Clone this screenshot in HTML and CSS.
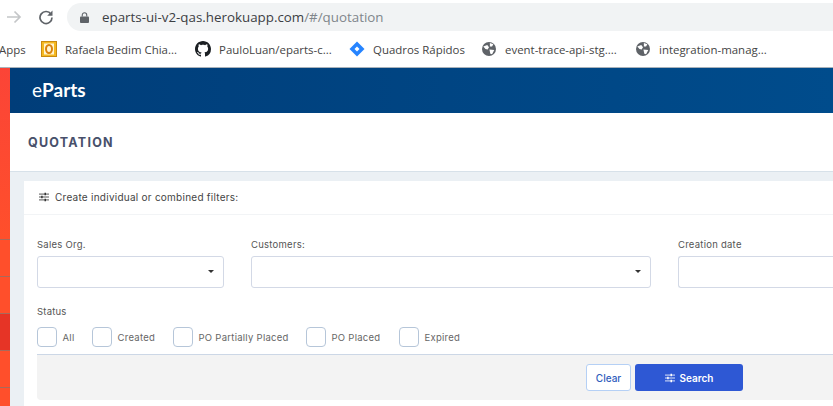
FILE: index.html
```html
<!DOCTYPE html>
<html lang="en">
<head>
    <meta charset="UTF-8">
    <title>eParts - Quotation</title>
    <link rel="stylesheet" href="styles.css">
</head>
<body>
    <div class="chrome">
        <div class="toolbar">
            <svg class="nav-icon" viewBox="0 0 16 16" width="16" height="16"><path d="M1 8h13M8.500 2.500 14 8l-5.500 5.500" fill="none" stroke="#c4c6c8" stroke-width="1.700"/></svg>
            <svg class="nav-icon reload" viewBox="0 0 16 16" width="16" height="16"><path d="M13 5.200A6 6 0 1 0 14 8.500" fill="none" stroke="#5f6368" stroke-width="1.700"/><path d="M14.500 1.500v5.300H9.200z" fill="#5f6368"/></svg>
            <div class="address">
                <svg class="lock" viewBox="0 0 10 12" width="9" height="11"><path d="M1 5h8a1 1 0 0 1 1 1v5a1 1 0 0 1-1 1H1a1 1 0 0 1-1-1V6a1 1 0 0 1 1-1z" fill="#5f6368"/><path d="M2.500 5V3.300a2.500 2.500 0 0 1 5 0V5" fill="none" stroke="#5f6368" stroke-width="1.200"/></svg>
                <span class="host">eparts-ui-v2-qas.herokuapp.com</span><span class="path">/#/quotation</span>
            </div>
        </div>
        <div class="bookmarks">
            <span class="bm bm-apps">Apps</span>
            <span class="bm bm-rafaela">
                <svg viewBox="0 0 16 16" width="16" height="16"><rect x="0.500" y="0.500" width="15" height="15" fill="#f5b921" stroke="#c98a10"/><rect x="3" y="2.500" width="10" height="11" fill="#fff4d0"/><ellipse cx="8" cy="8" rx="3" ry="4" fill="none" stroke="#d9820f" stroke-width="2"/></svg>
                Rafaela Bedim Chia...
            </span>
            <span class="bm bm-github">
                <svg viewBox="0 0 16 16" width="16" height="16"><path fill="#1b1f23" d="M8 0C3.580 0 0 3.580 0 8c0 3.540 2.290 6.530 5.470 7.590.4.070.55-.17.55-.38 0-.19-.01-.82-.01-1.490-2.010.37-2.530-.49-2.690-.94-.09-.23-.48-.94-.82-1.130-.28-.15-.68-.52-.01-.53.63-.01 1.080.58 1.230.82.720 1.210 1.870.87 2.330.66.070-.52.280-.87.510-1.070-1.780-.2-3.640-.89-3.640-3.950 0-.87.310-1.590.820-2.150-.08-.2-.36-1.020.08-2.120 0 0 .67-.21 2.200.82.640-.18 1.320-.27 2-.27s1.360.09 2 .27c1.530-1.040 2.200-.82 2.200-.82.440 1.100.160 1.920.080 2.120.510.560.820 1.270.820 2.150 0 3.070-1.870 3.750-3.650 3.950.290.250.540.730.540 1.480 0 1.070-.01 1.930-.01 2.200 0 .210.150.460.550.380A8.010 8.010 0 0 0 16 8c0-4.420-3.580-8-8-8z"/></svg>
                PauloLuan/eparts-c...
            </span>
            <span class="bm bm-jira">
                <svg viewBox="0 0 16 16" width="16" height="16"><path d="M8 0.500 15.500 8 8 15.500 0.500 8z" fill="#2684ff"/><path d="M8 5.500 10.500 8 8 10.500 5.500 8z" fill="#fff"/></svg>
                Quadros Rápidos
            </span>
            <span class="bm bm-trace">
                <svg class="globe" viewBox="0 0 16 16" width="14" height="14"><circle cx="8" cy="8" r="8" fill="#5f6368"/><path d="M1.500 5 6 3.500l2 2.500-1.500 2.500-2.500-.5zM9 1l4 1.500-1.500 2.500H9zM8.500 8.500l5.500.5-2.500 5-2-.5z" fill="#fff"/></svg>
                event-trace-api-stg....
            </span>
            <span class="bm">
                <svg class="globe" viewBox="0 0 16 16" width="14" height="14"><circle cx="8" cy="8" r="8" fill="#5f6368"/><path d="M1.500 5 6 3.500l2 2.500-1.500 2.500-2.500-.5zM9 1l4 1.500-1.500 2.500H9zM8.500 8.500l5.500.5-2.500 5-2-.5z" fill="#fff"/></svg>
                integration-manag...
            </span>
        </div>
    </div>

    <div class="app">
        <div class="sidebar">
            <div class="side-item side-top"></div>
            <div class="side-item"></div>
            <div class="side-item"></div>
            <div class="side-item side-active"></div>
            <div class="side-item"></div>
        </div>
        <div class="main">
            <div class="brand-bar"><span class="brand"><span class="brand-e">e</span>Parts</span></div>
            <div class="title-bar"><h1>QUOTATION</h1></div>
            <div class="content">
                <div class="card">
                    <div class="card-head">
                        <svg class="filter-icon" viewBox="0 0 12 12" width="10" height="10"><path d="M0 2.500h12M0 6h12M0 9.500h12" stroke="#333" stroke-width="1"/><path d="M7.500 1v3M3.500 4.500v3M7.500 8v3" stroke="#333" stroke-width="1.800"/></svg>
                        Create individual or combined filters:
                    </div>
                    <div class="card-body">
                        <div class="fields">
                            <div class="field field-org">
                                <label>Sales Org.</label>
                                <div class="select"><span class="caret"></span></div>
                            </div>
                            <div class="field field-customers">
                                <label>Customers:</label>
                                <div class="select"><span class="caret"></span></div>
                            </div>
                            <div class="field field-date">
                                <label>Creation date</label>
                                <div class="select"></div>
                            </div>
                        </div>
                        <div class="status-label">Status</div>
                        <div class="status-row">
                            <span class="check check-all"><i></i>All</span>
                            <span class="check check-created"><i></i>Created</span>
                            <span class="check check-partial"><i></i>PO Partially Placed</span>
                            <span class="check check-placed"><i></i>PO Placed</span>
                            <span class="check"><i></i>Expired</span>
                        </div>
                    </div>
                    <div class="actions">
                        <button class="btn-clear">Clear</button>
                        <button class="btn-search">
                            <svg viewBox="0 0 12 12" width="10" height="10"><path d="M0 2.500h12M0 6h12M0 9.500h12" stroke="#fff" stroke-width="1"/><path d="M7.500 1v3M3.500 4.500v3M7.500 8v3" stroke="#fff" stroke-width="1.800"/></svg>
                            Search
                        </button>
                    </div>
                </div>
            </div>
        </div>
    </div>
</body>
</html>
```

FILE: styles.css
```css
html, body {
    margin: 0;
    padding: 0;
    height: 406px;
    overflow: hidden;
}
body {
    width: 833px;
    background-color: #fff;
    font-family: 'Inter', 'Liberation Sans', sans-serif;
    color: #444;
}

/* browser chrome */
.chrome {
    height: 67px;
    background-color: #fff;
    border-bottom: 1px solid #a9b2ba;
    font-family: 'Open Sans', 'Liberation Sans', sans-serif;
}
.toolbar {
    display: flex;
    align-items: center;
    height: 34px;
}
.nav-icon {
    margin-left: 6px;
    flex: none;
}
.reload {
    margin-left: 16px;
}
.address {
    display: flex;
    align-items: center;
    flex: 1;
    height: 28px;
    margin-left: 13px;
    padding-left: 13px;
    background-color: #f1f3f4;
    border-radius: 14px 0 0 14px;
    font-size: 13.350px;
}
.lock {
    margin-right: 13px;
}
.host {
    color: #3c4043;
}
.path {
    color: #80868b;
}
.bookmarks {
    display: flex;
    align-items: center;
    height: 30px;
    margin-left: -1px;
    font-size: 11.450px;
    color: #444;
    white-space: nowrap;
}
.bm {
    display: flex;
    align-items: center;
    gap: 8px;
}
.bm-apps {
    width: 42px;
}
.bm-rafaela {
    width: 154px;
}
.bm-github {
    width: 154px;
}
.bm-jira {
    width: 133px;
}
.bm-trace {
    width: 154px;
}
.globe {
    margin-right: 1px;
}

/* app */
.app {
    display: flex;
    height: 338px;
}
.sidebar {
    display: flex;
    flex-direction: column;
    width: 10px;
    flex: none;
    background-color: #ff4f2b;
}
.side-item {
    height: 36px;
    border-bottom: 1px solid #a86a5c;
}
.side-top {
    height: 171px;
    background: linear-gradient(#fb4437, #ff4f2b);
}
.side-active {
    background-color: #e63426;
}
.main {
    flex: 1;
    min-width: 0;
}
.brand-bar {
    display: flex;
    align-items: center;
    height: 45px;
    padding-left: 22px;
    background: linear-gradient(to right, #003d79, #004c8c);
}
.brand {
    color: #fff;
    font-family: 'Lato', 'Liberation Sans', sans-serif;
    font-size: 19px;
    font-weight: 700;
    line-height: 43px;
    height: 45px;
}
.brand-e {
    font-weight: 400;
}
.title-bar {
    display: flex;
    align-items: center;
    height: 59px;
    padding-left: 18px;
    background-color: #fff;
    border-bottom: 1px solid #d7e1e9;
    box-sizing: border-box;
}
h1 {
    margin: 0;
    font-size: 12.500px;
    font-weight: 700;
    letter-spacing: 1.250px;
    color: #48506b;
}
.content {
    height: 225px;
    padding: 9px 0 0 14px;
    background-color: #ebf0f4;
}
.card {
    background-color: #fff;
    height: 225px;
    font-size: 9.500px;
}
.card-head {
    display: flex;
    align-items: center;
    gap: 6px;
    height: 32px;
    padding: 0 0 1px 15px;
    border-bottom: 1px solid #f2f4f6;
    font-size: 10px;
    letter-spacing: 0.250px;
    color: #444;
}
.card-body {
    padding: 24px 0 0 13px;
}
.fields {
    display: flex;
    gap: 27px;
}
.field {
    flex: none;
}
.field label {
    display: block;
    height: 17px;
    letter-spacing: 0.250px;
    color: #555;
}
.field-org {
    width: 187px;
}
.field-customers {
    width: 400px;
}
.field .select {
    position: relative;
    height: 30px;
    background-color: #fff;
    border: 1px solid #d3d9e6;
    border-radius: 3px;
}
/* this field runs on past the right edge of the window */
.field-date {
    flex: 1;
    min-width: 0;
}
.field-date .select {
    border-right: none;
    border-radius: 3px 0 0 3px;
}
.caret {
    position: absolute;
    right: 9px;
    top: 13px;
    border-left: 3px solid transparent;
    border-right: 3px solid transparent;
    border-top: 3.500px solid #333;
}
.status-label {
    margin-top: 18px;
    height: 21px;
    letter-spacing: 0.200px;
    color: #555;
}
.status-row {
    display: flex;
    align-items: center;
    letter-spacing: 0.270px;
    color: #666;
}
.check {
    display: flex;
    align-items: center;
    gap: 5.500px;
}
.check i {
    display: block;
    width: 18px;
    height: 18px;
    border: 1px solid #b6c6d9;
    border-radius: 4px;
}
.check-all {
    width: 55px;
}
.check-created {
    width: 81px;
}
.check-partial {
    width: 133px;
}
.check-placed {
    width: 93px;
}
.actions {
    display: flex;
    align-items: center;
    justify-content: flex-end;
    gap: 4px;
    height: 45px;
    margin: 7px 0 0 13px;
    padding-right: 90px;
    background-color: #f3f3f3;
    border-top: 1px solid #ccd7e6;
    border-bottom-left-radius: 4px;
}
.actions button {
    height: 27px;
    padding: 0;
    border-radius: 3px;
    font-family: inherit;
    font-size: 10px;
    font-weight: 500;
}
.btn-clear {
    width: 45px;
    background-color: #fff;
    border: 1px solid #b5d0f5;
    color: #2f5dbd;
}
.actions .btn-search {
    display: flex;
    align-items: center;
    justify-content: center;
    gap: 5px;
    width: 108px;
    background-color: #2e58d4;
    border: none;
    color: #fff;
    font-weight: 600;
}
```
